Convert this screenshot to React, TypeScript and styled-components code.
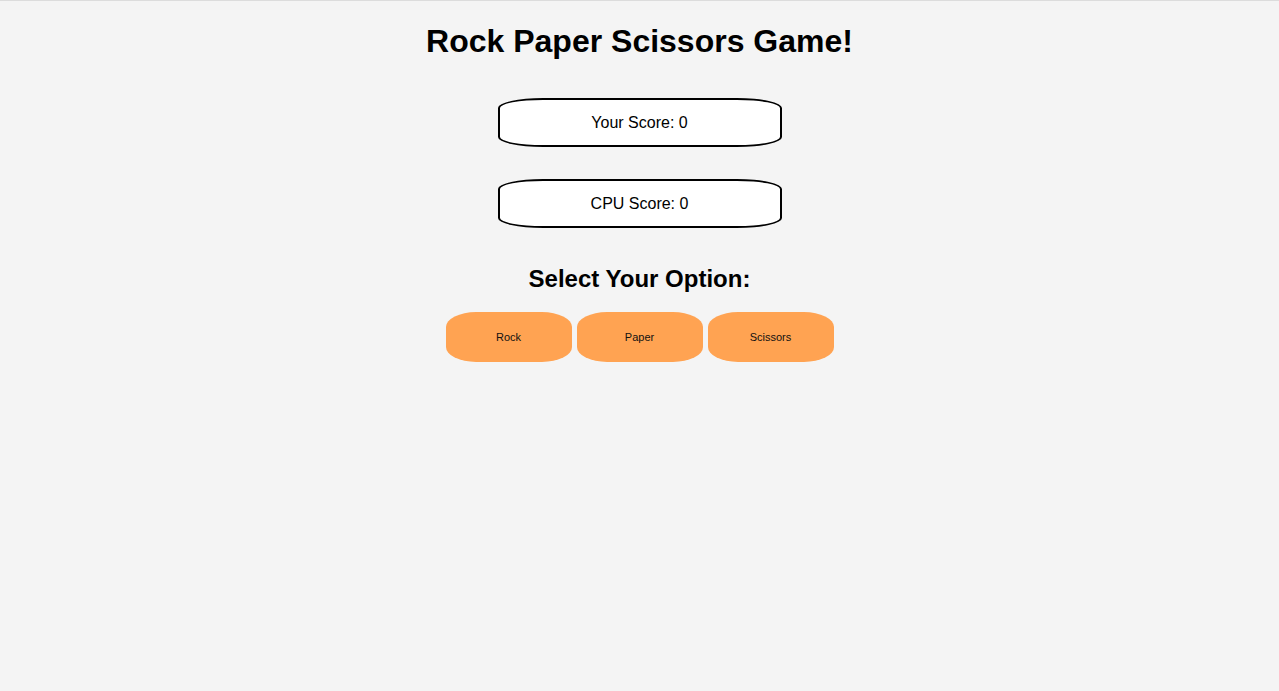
import { useState } from 'react';
import styled, { createGlobalStyle } from 'styled-components';

const GlobalStyle = createGlobalStyle`
  html, body {
    margin: 0;
    padding: 0;
    background: #f4f4f4;
    font-family: "Liberation Sans", Arial, sans-serif;
  }
`;

const OPTIONS = ['Rock', 'Paper', 'Scissors'];

function App() {
  const [score] = useState({ you: 0, cpu: 0 });

  return (
    <Page>
      <GlobalStyle />
      <Title>Rock Paper Scissors Game!</Title>
      <ScoreList>
        <ScoreBox>Your Score: {score.you}</ScoreBox>
        <ScoreBox>CPU Score: {score.cpu}</ScoreBox>
      </ScoreList>
      <Subtitle>Select Your Option:</Subtitle>
      <Choices>
        {OPTIONS.map((opt) => (
          <ChoiceButton key={opt}>{opt}</ChoiceButton>
        ))}
      </Choices>
    </Page>
  );
}

export default App;

const Page = styled.div`
  display: flex;
  flex-direction: column;
  align-items: center;
  min-height: 690px;
  border-top: 1px solid #dcdcdc;
  background: #f4f4f4;
  color: #000;
`;

const Title = styled.h1`
  margin: 22px 0 38px;
  font-size: 32px;
  font-weight: bold;
  line-height: 37px;
`;

const ScoreList = styled.div`
  display: flex;
  flex-direction: column;
  gap: 32px;
`;

const ScoreBox = styled.div`
  display: flex;
  align-items: center;
  justify-content: center;
  box-sizing: border-box;
  width: 284px;
  height: 49px;
  border: 2px solid #000;
  border-radius: 45px / 10px;
  background: #fff;
  font-size: 16px;
`;

const Subtitle = styled.h2`
  margin: 37px 0 19px;
  font-size: 24px;
  font-weight: bold;
  line-height: 28px;
`;

const Choices = styled.div`
  display: flex;
  gap: 5px;
`;

const ChoiceButton = styled.button`
  box-sizing: border-box;
  width: 126px;
  height: 50px;
  border: none;
  border-radius: 30px / 15px;
  background: #ffa352;
  color: #111;
  font-family: "Liberation Sans", Arial, sans-serif;
  font-size: 11px;
  cursor: pointer;
`;
